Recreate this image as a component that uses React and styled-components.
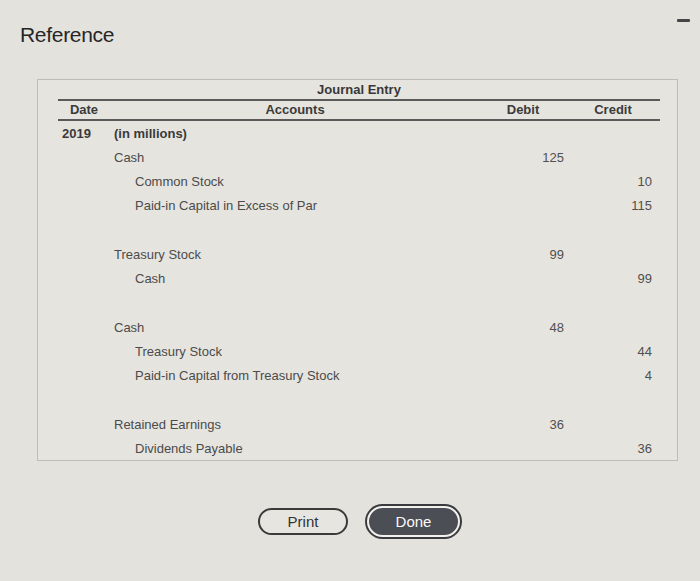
import React from "react";
import styled, { createGlobalStyle } from "styled-components";

const Global = createGlobalStyle`
  html, body { margin: 0; padding: 0; background: #e4e2dd; }
  body { font-family: "Liberation Sans", Arial, Helvetica, sans-serif; }
`;

const Page = styled.div`
  width: 700px;
  height: 581px;
  background: #e4e2dd;
  overflow: hidden;
`;

const TopBar = styled.div`
  display: flex;
  justify-content: space-between;
  align-items: flex-start;
  padding: 23px 10px 0 20px;
  height: 24px;
`;

const Title = styled.h1`
  margin: 0;
  font-size: 21px;
  line-height: 24px;
  font-weight: 400;
  color: #262626;
  letter-spacing: -0.3px;
`;

const Dash = styled.span`
  display: block;
  width: 13px;
  height: 3px;
  margin-top: -4px;
  background: #454545;
  border-radius: 1px;
`;

const Panel = styled.div`
  box-sizing: border-box;
  margin: 32px 0 0 37px;
  width: 641px;
  height: 382px;
  border: 1px solid #bdbcb7;
  background: #e6e4df;
  padding: 0 17px 0 20px;
`;

const Caption = styled.div`
  text-align: center;
  font-size: 13px;
  font-weight: 700;
  line-height: 19px;
  color: #383838;
  border-bottom: 2px solid #5a5a5a;
`;

const cols = "52px 370px 86px 1fr";

const HeadRow = styled.div`
  display: grid;
  grid-template-columns: ${cols};
  height: 18px;
  line-height: 18px;
  font-size: 13px;
  font-weight: 700;
  color: #3b3b3b;
  border-bottom: 2px solid #5a5a5a;
`;

const HeadCell = styled.div`
  text-align: center;
  padding-left: ${(p) => p.$pl || 0}px;
`;

const Body = styled.div`
  padding-top: 1px;
  display: flex;
  flex-direction: column;
`;

const Group = styled.div`
  display: flex;
  flex-direction: column;
  margin-top: ${(p) => (p.$first ? 0 : 25)}px;
`;

const Row = styled.div`
  display: grid;
  grid-template-columns: ${cols};
  height: 24px;
  line-height: 24px;
  font-size: 13px;
  color: #4b4b4b;
`;

const DateCell = styled.div`
  padding-left: 4px;
  font-weight: 700;
  color: #3a3a3a;
`;

const AccountCell = styled.div`
  padding-left: ${(p) => (p.$credit ? 25 : 4)}px;
  font-weight: ${(p) => (p.$bold ? 700 : 400)};
  color: ${(p) => (p.$bold ? "#3a3a3a" : "#4b4b4b")};
  white-space: nowrap;
`;

const Amount = styled.div`
  text-align: right;
  padding-right: ${(p) => p.$pr}px;
  color: #505050;
`;

const Buttons = styled.div`
  display: flex;
  align-items: center;
  gap: 19px;
  padding: 45px 0 0 258px;
`;

const PrintButton = styled.button`
  box-sizing: border-box;
  width: 90px;
  height: 27px;
  border: 2px solid #3a3a3a;
  border-radius: 14px;
  background: #e7e5e0;
  color: #333;
  font-family: inherit;
  font-size: 15px;
  padding: 0;
`;

const DoneButton = styled.button`
  box-sizing: border-box;
  width: 93px;
  height: 31px;
  border: 2px solid #f2f1ee;
  border-radius: 16px;
  background: #4b4e55;
  box-shadow: 0 0 0 2px #3a3b3f;
  color: #fafafa;
  font-family: inherit;
  font-size: 15px;
  padding: 0;
`;

const groups = [
  [
    { date: "2019", account: "(in millions)", bold: true },
    { account: "Cash", debit: "125" },
    { account: "Common Stock", credit: "10", isCredit: true },
    { account: "Paid-in Capital in Excess of Par", credit: "115", isCredit: true },
  ],
  [
    { account: "Treasury Stock", debit: "99" },
    { account: "Cash", credit: "99", isCredit: true },
  ],
  [
    { account: "Cash", debit: "48" },
    { account: "Treasury Stock", credit: "44", isCredit: true },
    { account: "Paid-in Capital from Treasury Stock", credit: "4", isCredit: true },
  ],
  [
    { account: "Retained Earnings", debit: "36" },
    { account: "Dividends Payable", credit: "36", isCredit: true },
  ],
];

export default function App() {
  return (
    <Page>
      <Global />
      <TopBar>
        <Title>Reference</Title>
        <Dash />
      </TopBar>
      <Panel>
        <Caption>Journal Entry</Caption>
        <HeadRow>
          <HeadCell>Date</HeadCell>
          <HeadCell>Accounts</HeadCell>
          <HeadCell>Debit</HeadCell>
          <HeadCell $pl={0}>Credit</HeadCell>
        </HeadRow>
        <Body>
          {groups.map((g, gi) => (
            <Group key={gi} $first={gi === 0}>
              {g.map((r, ri) => (
                <Row key={ri}>
                  <DateCell>{r.date || ""}</DateCell>
                  <AccountCell $credit={r.isCredit} $bold={r.bold}>
                    {r.account}
                  </AccountCell>
                  <Amount $pr={2}>{r.debit || ""}</Amount>
                  <Amount $pr={8}>{r.credit || ""}</Amount>
                </Row>
              ))}
            </Group>
          ))}
        </Body>
      </Panel>
      <Buttons>
        <PrintButton>Print</PrintButton>
        <DoneButton>Done</DoneButton>
      </Buttons>
    </Page>
  );
}
